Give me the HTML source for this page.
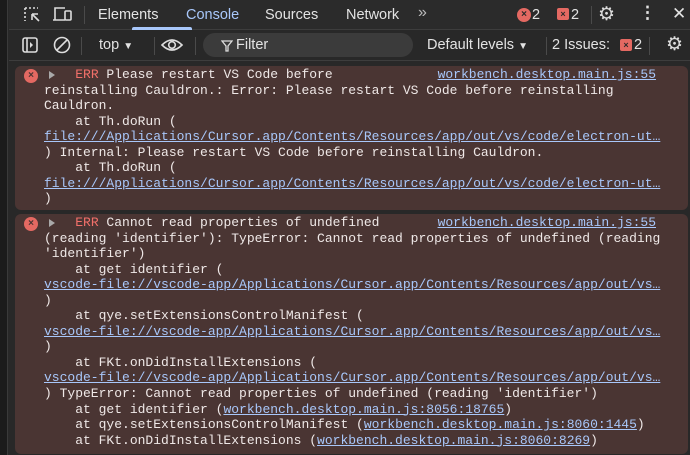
<!DOCTYPE html>
<html><head><meta charset="utf-8"><style>
*{box-sizing:border-box;margin:0;padding:0}
body{width:690px;height:455px;overflow:hidden;background:#282828;font-family:"Liberation Sans",sans-serif;position:relative;color:#e3e3e3}
.strip{position:absolute;left:0;top:0;width:8px;height:455px;background:#1b1b1b;border-right:1px solid #3a3a3a}
.bar1{position:absolute;left:9px;top:0;right:0;height:30px;background:#2b2b2b;border-bottom:1px solid #3d3d3d}
.bar2{position:absolute;left:9px;top:30px;right:0;height:31px;background:#282828;border-bottom:1px solid #3d3d3d}
.t{position:absolute;font-size:14.5px;color:#e3e3e3;top:7px}
.sep{position:absolute;width:1px;background:#4a4a4a}
.box{position:absolute;left:15px;right:2px;background:#4a3533;border-radius:6px;font-family:"Liberation Mono",monospace;font-size:13px;line-height:15.55px;color:#efe8e7;white-space:pre;padding-left:29px;overflow:hidden}
a{color:#a8c7fa;text-decoration:underline}
.err{color:#f2706a}
.x{position:absolute;left:9px;width:14px;height:14px;border-radius:50%;background:#e46962;color:#4a3533;font:bold 10px/14px "Liberation Sans",sans-serif;text-align:center}
.tri{position:absolute;left:34px;width:0;height:0;border-left:6px solid #a9a9a9;border-top:4px solid transparent;border-bottom:4px solid transparent}
.rl{position:absolute;right:32px}
</style></head><body>
<div class="strip"></div>
<div class="bar1">
<svg style="position:absolute;left:14px;top:6px" width="20" height="18" viewBox="0 0 20 18"><path d="M2 2h13M2 2v13" stroke="#ddd" stroke-width="1.6" stroke-dasharray="2 2" fill="none"/><path d="M9 8l7 7M9 8v6M9 8h6" stroke="#ddd" stroke-width="1.6" fill="none"/></svg>
<svg style="position:absolute;left:43px;top:5px" width="22" height="18" viewBox="0 0 22 18"><path d="M3 15V3h10M1 15h12" stroke="#ddd" stroke-width="1.6" fill="none"/><rect x="13" y="6" width="6" height="9" rx="1" stroke="#ddd" stroke-width="1.6" fill="none"/></svg>
<div class="sep" style="left:75px;top:6px;height:18px"></div>
<span class="t" style="left:89px">Elements</span>
<span class="t" style="left:177px;color:#a8c7fa">Console</span>
<div style="position:absolute;left:123px;top:27px;width:60px;height:3px;background:#a8c7fa;border-radius:2px 2px 0 0;left:123px"></div>
<span class="t" style="left:256px">Sources</span>
<span class="t" style="left:337px">Network</span>
<span class="t" style="left:409px;top:4px;font-size:16px;color:#bbb">»</span>
<div class="x" style="left:508px;top:8px;color:#2b2b2b">×</div><span class="t" style="left:523px">2</span>
<div style="position:absolute;left:548px;top:8px;width:12px;height:12px;background:#e46962;border-radius:2px;color:#2b2b2b;font:bold 9px/12px sans-serif;text-align:center">×</div><span class="t" style="left:562px">2</span>
<div class="sep" style="left:582px;top:6px;height:18px"></div>
<span class="t" style="left:589px;top:3px;font-size:19px;color:#ddd">⚙</span>
<span class="t" style="left:630px;top:3px;font-size:17px;font-weight:bold">⋮</span>
<span class="t" style="left:663px;top:4px;font-size:17px">✕</span>
</div>
<div class="bar2">
<svg style="position:absolute;left:13px;top:7px" width="16" height="16"><rect x="1" y="1" width="14" height="14" rx="2" stroke="#ddd" stroke-width="1.6" fill="none"/><path d="M5 1v14" stroke="#ddd" stroke-width="1.6"/><path d="M8 5l3 3-3 3z" fill="#ddd"/></svg>
<svg style="position:absolute;left:44px;top:6px" width="18" height="18"><circle cx="9" cy="9" r="7.5" stroke="#ddd" stroke-width="1.6" fill="none"/><path d="M4 14L14 4" stroke="#ddd" stroke-width="1.6"/></svg>
<div class="sep" style="left:72px;top:7px;height:18px"></div>
<span class="t" style="left:90px;top:7px">top <span style="font-size:10px">▼</span></span>
<div class="sep" style="left:145px;top:7px;height:18px"></div>
<svg style="position:absolute;left:151px;top:7px" width="24" height="16"><path d="M2 8Q12 -2 22 8Q12 18 2 8z" stroke="#ddd" stroke-width="1.6" fill="none"/><circle cx="12" cy="8" r="3.3" stroke="#ddd" stroke-width="1.6" fill="none"/></svg>
<div class="sep" style="left:186px;top:7px;height:18px"></div>
<div style="position:absolute;left:194px;top:3px;width:210px;height:24px;background:#3b3b3b;border-radius:12px"></div>
<svg style="position:absolute;left:212px;top:10px" width="12" height="12"><path d="M1 1h10L7 6v5H5V6z" stroke="#ddd" stroke-width="1.3" fill="none"/></svg>
<span class="t" style="left:227px;top:7px">Filter</span>
<span class="t" style="left:418px;top:7px">Default levels <span style="font-size:10px">▼</span></span>
<div class="sep" style="left:537px;top:7px;height:18px"></div>
<span class="t" style="left:543px;top:7px">2 Issues:</span>
<div style="position:absolute;left:611px;top:9px;width:12px;height:12px;background:#e46962;border-radius:2px;color:#2b2b2b;font:bold 9px/12px sans-serif;text-align:center">×</div><span class="t" style="left:625px;top:7px">2</span>
<div class="sep" style="left:640px;top:7px;height:18px"></div>
<span class="t" style="left:657px;top:3px;font-size:19px;color:#ddd">⚙</span>
</div>

<div class="box" style="top:66px;height:144px;padding-top:1px"><div class="x" style="top:3px">×</div><div class="tri" style="top:5px"></div>    <span class="err">ERR</span> Please restart VS Code before<span class="rl" style="top:1px"><a>workbench.desktop.main.js:55</a></span>
reinstalling Cauldron.: Error: Please restart VS Code before reinstalling
Cauldron.
    at Th.doRun (
<a>file:///Applications/Cursor.app/Contents/Resources/app/out/vs/code/electron-ut…</a>
) Internal: Please restart VS Code before reinstalling Cauldron.
    at Th.doRun (
<a>file:///Applications/Cursor.app/Contents/Resources/app/out/vs/code/electron-ut…</a>
)</div>

<div class="box" style="top:214px;height:240px;padding-top:1px"><div class="x" style="top:3px">×</div><div class="tri" style="top:5px"></div>    <span class="err">ERR</span> Cannot read properties of undefined<span class="rl" style="top:1px"><a>workbench.desktop.main.js:55</a></span>
(reading 'identifier'): TypeError: Cannot read properties of undefined (reading
'identifier')
    at get identifier (
<a>vscode-file://vscode-app/Applications/Cursor.app/Contents/Resources/app/out/vs…</a>
)
    at qye.setExtensionsControlManifest (
<a>vscode-file://vscode-app/Applications/Cursor.app/Contents/Resources/app/out/vs…</a>
)
    at FKt.onDidInstallExtensions (
<a>vscode-file://vscode-app/Applications/Cursor.app/Contents/Resources/app/out/vs…</a>
) TypeError: Cannot read properties of undefined (reading 'identifier')
    at get identifier (<a>workbench.desktop.main.js:8056:18765</a>)
    at qye.setExtensionsControlManifest (<a>workbench.desktop.main.js:8060:1445</a>)
    at FKt.onDidInstallExtensions (<a>workbench.desktop.main.js:8060:8269</a>)</div>
</body></html>
